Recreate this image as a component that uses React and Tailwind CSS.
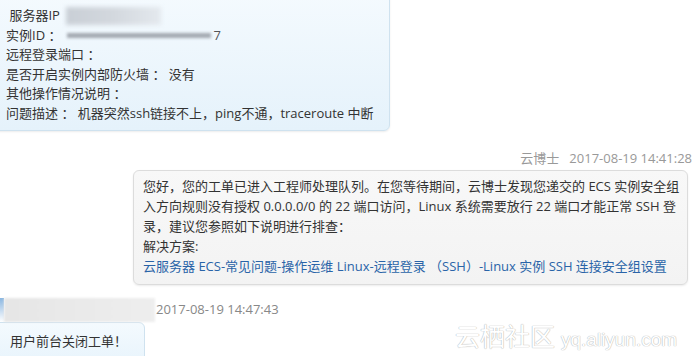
export default function App() {
  const cjk = "font-['Open_Sans','Noto_Sans_CJK_SC',sans-serif]"

  return (
    <div className={`relative w-[692px] h-[356px] overflow-hidden bg-white text-[13px] text-[#333] ${cjk}`}>
      {/* user message */}
      <div className="ml-[-6px] mt-[-6px] w-[396px] rounded-br-md border border-[#cfe2ef] bg-gradient-to-b from-[#f4fafe] to-[#e5f2fb] pl-[11px] pt-[11px] pb-[6px] leading-[19.6px] shadow-[0_1px_2px_rgba(0,0,0,0.08)]">
        <div className="flex items-center whitespace-nowrap">
          <span>&nbsp;服务器IP</span>
          <span className="ml-[6px] inline-block h-[18px] w-[95px] bg-gradient-to-r from-[#c9cfd6] via-[#d3d8de] to-[#e4e9ee] blur-[2px]" />
        </div>
        <div className="flex items-center whitespace-nowrap">
          <span>实例ID ：</span>
          <span className="ml-[6px] inline-block h-[5px] w-[144px] bg-[#a3a9b1] blur-[1.5px]" />
          <span className="ml-[2px] text-[#555]">7</span>
        </div>
        <div className="whitespace-nowrap">远程登录端口 ：</div>
        <div className="whitespace-nowrap">是否开启实例内部防火墙 ： 没有</div>
        <div className="whitespace-nowrap">其他操作情况说明 ：</div>
        <div className="whitespace-nowrap">问题描述 ： 机器突然ssh链接不上，ping不通，traceroute 中断</div>
      </div>

      {/* reply header */}
      <div className="mt-[18px] flex justify-end gap-[10px] whitespace-nowrap leading-[18px] text-[#999]">
        <span>云博士</span>
        <span>2017-08-19 14:41:28</span>
      </div>

      {/* reply */}
      <div className="ml-[133px] mt-[3px] w-[555px] rounded-md border border-[#dcdcdc] bg-gradient-to-b from-[#f8f8f8] to-[#f3f3f3] pl-[9px] pt-[5px] pb-[8px] leading-[20px] shadow-[0_1px_2px_rgba(0,0,0,0.08)]">
        <div className="whitespace-nowrap">您好，您的工单已进入工程师处理队列。在您等待期间，云博士发现您递交的 ECS 实例安全组</div>
        <div className="whitespace-nowrap">入方向规则没有授权 0.0.0.0/0 的 22 端口访问，Linux 系统需要放行 22 端口才能正常 SSH 登</div>
        <div className="whitespace-nowrap">录，建议您参照如下说明进行排查：</div>
        <div className="whitespace-nowrap">解决方案:</div>
        <div className="whitespace-nowrap text-[#2a64a8]">云服务器 ECS-常见问题-操作运维 Linux-远程登录 （SSH）-Linux 实例 SSH 连接安全组设置</div>
      </div>

      {/* user footer */}
      <div className="mt-[13px] flex h-[24px] items-center">
        <span className="h-[24px] w-[4px] bg-gradient-to-b from-[#8ab6e0] to-[#ffffff]" />
        <span className="h-[24px] w-[151px] bg-gradient-to-r from-[#e6e6e6] to-[#eeeeee] blur-[1px]" />
        <span className="ml-[1px] whitespace-nowrap text-[#888]">2017-08-19 14:47:43</span>
      </div>

      <div className="flex items-end justify-between">
        <div className="ml-[-6px] w-[151px] rounded-tr-md border border-[#cfe2ef] bg-gradient-to-b from-[#f4fafe] to-[#e8f4fc] pl-[15px] pt-[8px] pb-[12px] leading-[20px]">
          用户前台关闭工单！
        </div>
        <div className="mb-[-2px] h-[7px] w-[87px] rounded-tl-md bg-[#9cc2e6]" />
      </div>

      {/* watermark */}
      <div className="absolute left-[455px] top-[322px] flex items-baseline gap-[6px] whitespace-nowrap text-white [text-shadow:0_0_1px_#b5b5b5,0_0_1px_#b5b5b5]">
        <span className="text-[25px] leading-[28px]">云栖社区</span>
        <span className="font-['Liberation_Sans',sans-serif] text-[19px] leading-[28px]">yq.aliyun.com</span>
      </div>
    </div>
  )
}
